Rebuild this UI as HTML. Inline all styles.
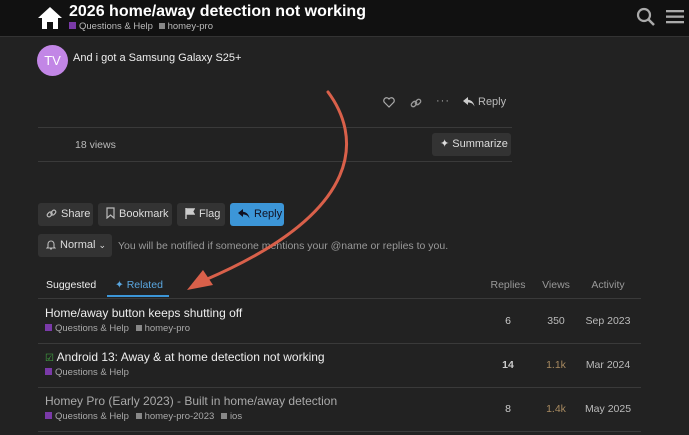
<!DOCTYPE html><html><head><style>
*{margin:0;padding:0;box-sizing:border-box}
body{width:689px;height:435px;overflow:hidden;background:#222;font-family:"Liberation Sans",sans-serif;color:#ddd;position:relative}
.a{position:absolute;white-space:nowrap}
.hdr{position:absolute;left:0;top:0;width:689px;height:37px;background:#111;border-bottom:1px solid #333}
.btn{position:absolute;background:#333;border-radius:3px;color:#ddd;font-size:11px;height:23px;line-height:23px;padding-left:8px}
.btn svg{vertical-align:-2px;margin-right:4px}
.sq{display:inline-block;width:7px;height:7px;margin-right:3px;vertical-align:0}
.tag{display:inline-block;width:6px;height:6px;background:#888;margin:0 3px 0 4px}
.t{font-size:12px;color:#eee}
.m{font-size:9.5px;color:#aaa}
.line{position:absolute;height:1px;background:#3a3a3a}
.n{font-size:10.5px;position:absolute;text-align:center;width:60px}
</style></head><body>
<div class="hdr"></div>
<svg class="a" style="left:37px;top:6px" width="26" height="24" viewBox="0 0 26 24"><path d="M13 1 L1 12 H5 V23 H10 V16 H16 V23 H21 V12 H25 Z" fill="#fff"/></svg>
<div class="a" style="left:69px;top:3px;font-size:16px;font-weight:bold;color:#fff">2026 home/away detection not working</div>
<div class="a" style="left:69px;top:21px;font-size:9.5px;color:#bbb"><span class="sq" style="background:#7a3aa8"></span>Questions &amp; Help <span class="tag" style="margin-left:3px"></span>homey-pro</div>
<svg class="a" style="left:636px;top:7px" width="20" height="20"><circle cx="8" cy="8" r="6" stroke="#aaa" stroke-width="2.2" fill="none"/><line x1="12.5" y1="12.5" x2="18" y2="18" stroke="#aaa" stroke-width="2.5"/></svg>
<svg class="a" style="left:666px;top:9px" width="18" height="15"><rect y="1" width="18" height="2.3" fill="#aaa"/><rect y="6.5" width="18" height="2.3" fill="#aaa"/><rect y="12" width="18" height="2.3" fill="#aaa"/></svg>
<div class="a" style="left:37px;top:45px;width:31px;height:31px;border-radius:50%;background:#c286e6;color:#fff;font-size:13px;text-align:center;line-height:31px">TV</div>
<div class="a" style="left:73px;top:52px;font-size:11px;color:#eee">And i got a Samsung Galaxy S25+</div>
<svg class="a" style="left:383px;top:97px" width="12" height="11" viewBox="0 0 12 11"><path d="M6 10 L1.3 5.3 A2.6 2.6 0 0 1 6 2 A2.6 2.6 0 0 1 10.7 5.3 Z" stroke="#aaa" stroke-width="1.2" fill="none"/></svg>
<svg class="a" style="left:410px;top:97px" width="12" height="12" viewBox="0 0 12 12"><g stroke="#999" stroke-width="1.3" fill="none"><rect x="1" y="5" width="6" height="4" rx="2" transform="rotate(-45 4 7)"/><rect x="5" y="3" width="6" height="4" rx="2" transform="rotate(-45 8 5)"/></g></svg>
<div class="a" style="left:436px;top:95px;font-size:11px;color:#aaa;letter-spacing:1px">···</div>
<svg class="a" style="left:463px;top:97px" width="12" height="10" viewBox="0 0 12 10"><path d="M5 0 L0 4 L5 8 V5.5 C8 5.5 10 6.5 11.5 9.5 C11 6 9 3 5 2.7 Z" fill="#ccc"/></svg>
<div class="a" style="left:478px;top:96px;font-size:11px;color:#bbb">Reply</div>
<div class="line" style="left:38px;top:127px;width:474px"></div>
<div class="a" style="left:75px;top:139px;font-size:10.5px;color:#bbb">18 views</div>
<div class="btn" style="left:432px;top:133px;width:79px">✦ Summarize</div>
<div class="line" style="left:38px;top:161px;width:474px"></div>
<div class="btn" style="left:38px;top:203px;width:55px"><svg width="11" height="11" viewBox="0 0 12 12"><g stroke="#bbb" stroke-width="1.3" fill="none"><rect x="1" y="5" width="6" height="4" rx="2" transform="rotate(-45 4 7)"/><rect x="5" y="3" width="6" height="4" rx="2" transform="rotate(-45 8 5)"/></g></svg>Share</div>
<div class="btn" style="left:98px;top:203px;width:74px"><svg width="9" height="12" viewBox="0 0 9 12"><path d="M1 1 H8 V11 L4.5 8 L1 11 Z" stroke="#bbb" stroke-width="1.2" fill="none"/></svg>Bookmark</div>
<div class="btn" style="left:177px;top:203px;width:48px"><svg width="10" height="11" viewBox="0 0 10 11"><path d="M1 0 V11 M1 1 H9 L7.5 3.5 L9 6 H1" stroke="#ccc" stroke-width="1.4" fill="#ccc"/></svg>Flag</div>
<div class="btn" style="left:230px;top:203px;width:54px;background:#3c96d8;color:#112"><svg width="12" height="10" viewBox="0 0 12 10"><path d="M5 0 L0 4 L5 8 V5.5 C8 5.5 10 6.5 11.5 9.5 C11 6 9 3 5 2.7 Z" fill="#112"/></svg>Reply</div>
<div class="btn" style="left:38px;top:234px;width:74px"><svg width="10" height="11" viewBox="0 0 10 11"><path d="M2 8 V5 A3 3 0 0 1 8 5 V8 L9 9 H1 Z M4 10 H6" stroke="#bbb" stroke-width="1.1" fill="none"/></svg>Normal <span style="font-size:9px">⌄</span></div>
<div class="a" style="left:118px;top:240px;font-size:10.5px;color:#999">You will be notified if someone mentions your @name or replies to you.</div>
<div class="a" style="left:46px;top:279px;font-size:10.5px;color:#eee">Suggested</div>
<div class="a" style="left:115px;top:279px;font-size:10.5px;color:#5aa7e0">✦ Related</div>
<div class="a" style="left:107px;top:295px;width:62px;height:2px;background:#3c96d8"></div>
<div class="n" style="left:478px;top:279px;color:#999">Replies</div>
<div class="n" style="left:526px;top:279px;color:#999">Views</div>
<div class="n" style="left:578px;top:279px;color:#999">Activity</div>
<div class="line" style="left:38px;top:298px;width:603px"></div>
<div class="a t" style="left:45px;top:306px">Home/away button keeps shutting off</div>
<div class="a m" style="left:45px;top:323px"><span class="sq" style="background:#7a3aa8"></span>Questions &amp; Help <span class="tag"></span>homey-pro</div>
<div class="n" style="left:478px;top:315px;color:#ccc">6</div><div class="n" style="left:526px;top:315px;color:#bbb">350</div><div class="n" style="left:578px;top:315px;color:#bbb">Sep 2023</div>
<div class="line" style="left:38px;top:343px;width:603px"></div>
<div class="a t" style="left:45px;top:350px"><span style="color:#4a4;font-size:10px">☑</span> Android 13: Away &amp; at home detection not working</div>
<div class="a m" style="left:45px;top:367px"><span class="sq" style="background:#7a3aa8"></span>Questions &amp; Help</div>
<div class="n" style="left:478px;top:359px;color:#ccc;font-weight:bold">14</div><div class="n" style="left:526px;top:359px;color:#a88a60">1.1k</div><div class="n" style="left:578px;top:359px;color:#bbb">Mar 2024</div>
<div class="line" style="left:38px;top:387px;width:603px"></div>
<div class="a t" style="left:45px;top:394px;color:#aaa">Homey Pro (Early 2023) - Built in home/away detection</div>
<div class="a m" style="left:45px;top:411px"><span class="sq" style="background:#7a3aa8"></span>Questions &amp; Help <span class="tag"></span>homey-pro-2023 <span class="tag"></span>ios</div>
<div class="n" style="left:478px;top:403px;color:#ccc">8</div><div class="n" style="left:526px;top:403px;color:#a88a60">1.4k</div><div class="n" style="left:578px;top:403px;color:#bbb">May 2025</div>
<div class="line" style="left:38px;top:431px;width:603px"></div>
<svg class="a" style="left:0;top:0" width="689" height="435"><path d="M328 92 C360 135 368 210 205 280" stroke="#d9604a" stroke-width="3" fill="none" stroke-linecap="round"/><path d="M187 290 L203 270 L213 285 Z" fill="#d9604a"/></svg>
</body></html>
